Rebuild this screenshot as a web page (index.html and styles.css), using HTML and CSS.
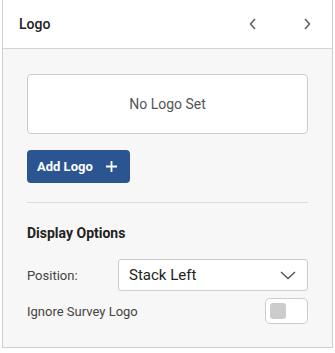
FILE: index.html
```html
<!DOCTYPE html>
<html lang="en">
<head>
  <meta charset="UTF-8" />
  <title>Logo</title>
  <link rel="stylesheet" href="styles.css">
</head>
<body>
  <div class="panel">
    <div class="panel-header">
      <h2>Logo</h2>
      <div class="nav">
        <svg width="8" height="12" viewBox="0 0 8 12"><path d="M6 1 L1.5 6 L6 11" fill="none" stroke="#555" stroke-width="1.4"/></svg>
        <svg width="8" height="12" viewBox="0 0 8 12"><path d="M2 1 L6.5 6 L2 11" fill="none" stroke="#555" stroke-width="1.4"/></svg>
      </div>
    </div>

    <div class="panel-body">
      <div class="logo-box">No Logo Set</div>
      <button class="btn">Add Logo
        <svg width="11" height="11" viewBox="0 0 11 11"><path d="M5.5 0 V11 M0 5.5 H11" stroke="#fff" stroke-width="1.8"/></svg>
      </button>

      <hr class="divider">

      <h3>Display Options</h3>

      <div class="row">
        <label>Position:</label>
        <div class="select">
          <span>Stack Left</span>
          <svg width="16" height="9" viewBox="0 0 16 9"><path d="M1 1 L8 7.5 L15 1" fill="none" stroke="#555" stroke-width="1.4"/></svg>
        </div>
      </div>

      <div class="row toggle-row">
        <label>Ignore Survey Logo</label>
        <div class="toggle"><span class="knob"></span></div>
      </div>
    </div>
  </div>
</body>
</html>
```

FILE: styles.css
```css
body {
  margin: 0;
  background: #fff;
  font-family: Roboto, "Liberation Sans", sans-serif;
  color: #222;
}
.panel {
  width: 331px;
  margin-left: 2px;
  box-sizing: border-box;
  border: 1px solid #cfcfcf;
  border-top: none;
}
.panel-header {
  height: 48px;
  background: #fff;
  border-bottom: 1px solid #d4d4d4;
  display: flex;
  align-items: center;
  justify-content: space-between;
  padding: 0 21px 0 16px;
}
.panel-header h2 {
  margin: 0;
  font-size: 14px;
  font-weight: 500;
  color: #222;
}
.nav {
  display: flex;
  gap: 46px;
}
.nav svg {
  display: block;
}
.panel-body {
  background: #f7f7f7;
  padding: 25px 24px 23px;
}
.logo-box {
  height: 60px;
  box-sizing: border-box;
  background: #fff;
  border: 1px solid #ccc;
  border-radius: 4px;
  display: flex;
  align-items: center;
  justify-content: center;
  font-size: 14px;
  color: #555;
}
.btn {
  margin-top: 16px;
  height: 33px;
  width: 103px;
  padding: 0 0 0 10px;
  display: flex;
  align-items: center;
  gap: 13px;
  background: #2b5591;
  color: #fff;
  border: none;
  border-radius: 4px;
  font-family: inherit;
  font-size: 13px;
  font-weight: 700;
}
.btn svg {
  display: block;
}
.divider {
  border: none;
  border-top: 1px solid #dcdcdc;
  margin: 19px 0 0;
}
h3 {
  margin: 22px 0 0;
  font-size: 14px;
  font-weight: 700;
  color: #222;
}
.row {
  display: flex;
  align-items: center;
  justify-content: space-between;
  margin-top: 18px;
}
.row label {
  font-size: 13px;
  color: #444;
}
.select {
  width: 190px;
  height: 32px;
  box-sizing: border-box;
  background: #fff;
  border: 1px solid #ccc;
  border-radius: 3px;
  display: flex;
  align-items: center;
  justify-content: space-between;
  padding: 0 11px 0 10px;
  font-size: 15px;
  color: #222;
}
.select svg {
  display: block;
}
.toggle-row {
  margin-top: 7px;
}
.toggle {
  width: 43px;
  height: 26px;
  box-sizing: border-box;
  background: #fff;
  border: 1px solid #ccc;
  border-radius: 5px;
  padding: 4px;
}
.knob {
  display: block;
  width: 16px;
  height: 16px;
  background: #ccc;
  border-radius: 3px;
}
```
